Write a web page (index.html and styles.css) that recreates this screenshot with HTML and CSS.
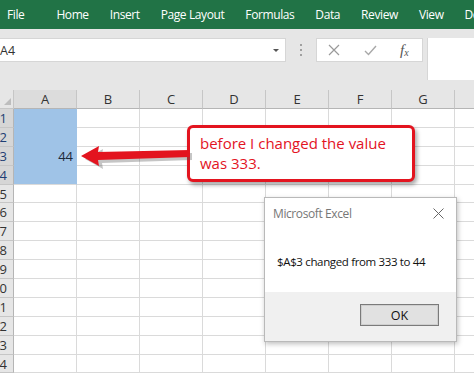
FILE: index.html
```html
<!DOCTYPE html>
<html lang="en">
<head>
    <meta charset="UTF-8">
    <meta name="viewport" content="width=device-width, initial-scale=1.0">
    <title>Excel - change tracking</title>
    <link rel="stylesheet" href="styles.css">
</head>
<body>
    <div class="ribbon">
        <span class="tab tab-file">File</span>
        <span class="tab">Home</span>
        <span class="tab">Insert</span>
        <span class="tab">Page Layout</span>
        <span class="tab">Formulas</span>
        <span class="tab">Data</span>
        <span class="tab">Review</span>
        <span class="tab">View</span>
        <span class="tab">Developer</span>
    </div>

    <div class="formula-row">
        <div class="name-box">
            <span>A4</span>
            <span class="dropdown"></span>
        </div>
        <div class="grip">
            <i></i><i></i><i></i>
        </div>
        <div class="fx-buttons">
            <svg class="fx-icon" width="12" height="12" viewBox="0 0 12 12"><path d="M1 1L11 11M11 1L1 11" stroke="#9a9a9a" stroke-width="1.2" fill="none"/></svg>
            <svg class="fx-icon" width="13" height="11" viewBox="0 0 13 11"><path d="M1 6L4.5 9.5L12 1" stroke="#a8a8a8" stroke-width="1.4" fill="none"/></svg>
            <span class="fx">f<sub>x</sub></span>
        </div>
        <div class="formula-input"></div>
    </div>

    <div class="sheet" id="sheet">
        <div class="corner"><span class="corner-tri"></span></div>
    </div>

    <div class="callout">
        before I changed the value<br>was 333.
    </div>
    <svg class="arrow" width="120" height="30" viewBox="0 0 120 30">
        <polygon points="3,14 21,4 20,10 110,8 110,15 20,18 21,24" fill="#5a5a5a" opacity="0.35" transform="translate(2 2)"/>
        <polygon points="1,13 19,3 18,9 110,7 110,14 18,17 19,23" fill="#e3141f"/>
    </svg>

    <div class="dialog">
        <div class="dialog-body">
            <div class="dialog-title">
                <span>Microsoft Excel</span>
                <svg width="11" height="11" viewBox="0 0 11 11"><path d="M0.5 0.5L10.5 10.5M10.5 0.5L0.5 10.5" stroke="#666" stroke-width="1" fill="none"/></svg>
            </div>
            <p class="dialog-msg">$A$3 changed from 333 to 44</p>
        </div>
        <div class="dialog-footer">
            <button class="ok-button">OK</button>
        </div>
    </div>

    <script>
        // Build the grid: header row + 14 rows, 7 visible columns
        const sheet = document.getElementById('sheet');
        const cols = ['A', 'B', 'C', 'D', 'E', 'F', 'G', 'H'];

        cols.forEach((c, i) => {
            const head = document.createElement('div');
            head.className = i === 0 ? 'col-head selected' : 'col-head';
            head.innerText = c;
            sheet.appendChild(head);
        });

        for (let r = 1; r <= 14; r++) {
            const rowHead = document.createElement('div');
            rowHead.className = r <= 4 ? 'row-head selected' : 'row-head';
            rowHead.innerHTML = `<span>${r}</span>`;
            sheet.appendChild(rowHead);

            cols.forEach((c, i) => {
                const cell = document.createElement('div');
                cell.className = 'cell';
                if (i === 0 && r <= 4) {
                    cell.classList.add('picked');
                    if (r === 4) cell.classList.add('picked-last');
                }
                if (i === 0 && r === 3) cell.innerText = '44';
                sheet.appendChild(cell);
            });
        }
    </script>
</body>
</html>
```

FILE: styles.css
```css
*,
*::before,
*::after {
    box-sizing: border-box;
}

:root {
    --green: #217346;
    --bar: #e6e6e6;
    --grid: #dadada;
    --head-line: #c6c6c6;
    --red: #e3141f;
    --ff-ui: "Open Sans", "Noto Sans", sans-serif;
}

body {
    margin: 0;
    width: 474px;
    height: 375px;
    overflow: hidden;
    position: relative;
    background: #fff;
    font-family: var(--ff-ui);
}

.ribbon {
    height: 29px;
    background: var(--green);
    display: flex;
    align-items: center;
    gap: 21px;
    padding-left: 7px;
    white-space: nowrap;
    overflow: hidden;
}

.tab {
    flex-shrink: 0;
    color: #fff;
    font-size: 12px;
    letter-spacing: -0.4px;
    line-height: 1;
}

.tab-file {
    margin-right: 11px;
}

.formula-row {
    height: 61px;
    background: var(--bar);
    display: flex;
    align-items: flex-start;
    padding-top: 9px;
}

.name-box {
    width: 294px;
    margin-left: -8px;
    height: 24px;
    background: #fff;
    border: 1px solid #d6d6d6;
    display: flex;
    align-items: center;
    justify-content: space-between;
    padding: 0 6px 0 7px;
    font-size: 12.5px;
    color: #333;
}

.dropdown {
    width: 0;
    height: 0;
    border-left: 3px solid transparent;
    border-right: 3px solid transparent;
    border-top: 3px solid #555;
}

.grip {
    width: 30px;
    height: 24px;
    display: flex;
    flex-direction: column;
    align-items: center;
    justify-content: center;
    gap: 3px;
}

.grip i {
    width: 2px;
    height: 2px;
    background: #a0a0a0;
}

.fx-buttons {
    width: 107px;
    height: 24px;
    background: #fff;
    border: 1px solid #d6d6d6;
    display: flex;
    align-items: center;
    padding-left: 11px;
    gap: 24px;
}

.fx {
    font-family: "Liberation Serif", serif;
    font-style: italic;
    font-size: 15px;
    color: #555;
    line-height: 1;
    margin-left: -1px;
}

.fx sub {
    font-size: 10px;
    vertical-align: -1px;
}

.formula-input {
    flex: 1;
    margin-left: 4px;
    height: 42px;
    background: #fff;
    border-left: 1px solid #d6d6d6;
}

.sheet {
    display: grid;
    grid-template-columns: 14px repeat(8, 63px);
    grid-template-rows: 19px;
    grid-auto-rows: 18.9px;
    overflow: hidden;
    font-size: 13px;
}

.corner {
    background: var(--bar);
    border-right: 1px solid var(--head-line);
    border-bottom: 1px solid var(--head-line);
    position: relative;
}

.corner-tri {
    position: absolute;
    right: 2px;
    bottom: 3px;
    width: 0;
    height: 0;
    border-left: 7px solid transparent;
    border-bottom: 7px solid #bdbdbd;
}

.col-head {
    background: var(--bar);
    border-right: 1px solid var(--head-line);
    border-bottom: 1px solid #b5b5b5;
    display: flex;
    align-items: center;
    justify-content: center;
    color: #333;
    font-size: 13px;
}

.col-head.selected {
    background: #dcdcdc;
}

.row-head {
    background: var(--bar);
    border-right: 1px solid #b5b5b5;
    border-bottom: 1px solid var(--head-line);
    display: flex;
    align-items: center;
    justify-content: flex-end;
    padding-right: 6px;
    overflow: hidden;
    color: #333;
    font-size: 13px;
}

.row-head.selected {
    background: #d6d6d6;
    color: #1f3f74;
}

.cell {
    border-right: 1px solid var(--grid);
    border-bottom: 1px solid var(--grid);
    display: flex;
    align-items: center;
    justify-content: flex-end;
    padding-right: 3px;
    color: #1e2a3a;
    font-size: 13px;
}

.cell.picked {
    background: #9fc3e7;
    border-right-color: #9fc3e7;
    border-bottom-color: #9fc3e7;
}

.cell.picked-last {
    border-bottom-color: var(--grid);
}

.callout {
    position: absolute;
    left: 187px;
    top: 125px;
    width: 228px;
    height: 57px;
    border: 3px solid var(--red);
    border-radius: 6px;
    background: #fff;
    box-shadow: 2px 3px 4px rgba(0, 0, 0, 0.35);
    padding: 5px 0 0 10px;
    color: var(--red);
    font-size: 15px;
    line-height: 20px;
}

.arrow {
    position: absolute;
    left: 80px;
    top: 143px;
}

.dialog {
    position: absolute;
    left: 264px;
    top: 197px;
    width: 193px;
    height: 145px;
    border: 1px solid #b9b9b9;
    box-shadow: 1px 2px 5px rgba(0, 0, 0, 0.25);
    display: flex;
    flex-direction: column;
    font-size: 11.5px;
    letter-spacing: -0.35px;
}

.dialog-body {
    flex: 1;
    background: #fff;
    padding: 7px 12px 0 8px;
}

.dialog-title {
    display: flex;
    justify-content: space-between;
    align-items: center;
    color: #777;
    font-size: 12px;
    letter-spacing: -0.4px;
}

.dialog-msg {
    margin: 32px 0 0 4px;
    color: #111;
}

.dialog-footer {
    height: 49px;
    background: #f0f0f0;
    display: flex;
    justify-content: flex-end;
    align-items: flex-start;
    padding: 12px 17px 0 0;
}

.ok-button {
    width: 79px;
    height: 22px;
    background: #e1e1e1;
    border: 1px solid #7a7a7a;
    box-shadow: inset 0 0 0 1px #cfcfcf;
    font-family: var(--ff-ui);
    font-size: 12.5px;
    color: #111;
    padding: 0;
}
```
